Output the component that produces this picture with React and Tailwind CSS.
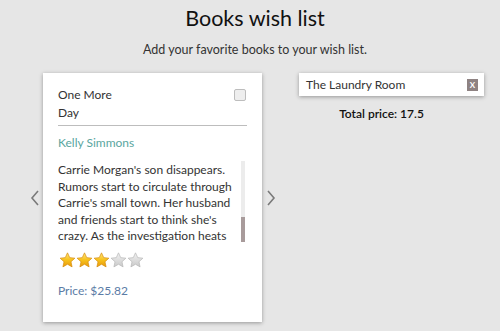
import React from "react";

const Star = ({ filled }) => (
  <svg width="17" height="16" viewBox="0 0 24 23">
    <defs>
      <linearGradient id={filled ? "gs" : "gg"} x1="0" y1="0" x2="0" y2="1">
        {filled ? (
          <>
            <stop offset="0" stopColor="#ffe680" />
            <stop offset="0.5" stopColor="#f7c21c" />
            <stop offset="1" stopColor="#e89a0c" />
          </>
        ) : (
          <>
            <stop offset="0" stopColor="#f2f2f2" />
            <stop offset="1" stopColor="#c9c9c9" />
          </>
        )}
      </linearGradient>
    </defs>
    <path
      d="M12 1.2l3.2 6.9 7.4.8-5.6 5.1 1.6 7.4L12 17.6l-6.6 3.8 1.6-7.4-5.6-5.1 7.4-.8z"
      fill={`url(#${filled ? "gs" : "gg"})`}
      stroke={filled ? "#d58a0a" : "#b5b5b5"}
      strokeWidth="1"
      strokeLinejoin="round"
    />
  </svg>
);

const Chevron = ({ dir }) => (
  <svg width="12" height="18" viewBox="0 0 12 18">
    <path
      d={dir === "left" ? "M9 2 L3 9 L9 16" : "M3 2 L9 9 L3 16"}
      fill="none"
      stroke="#7a7a7a"
      strokeWidth="1.6"
    />
  </svg>
);

export default function App() {
  return (
    <div
      className="w-[500px] h-[331px] bg-[#e6e6e6] overflow-hidden text-[#2b2b2b]"
      style={{ fontFamily: "Lato, 'Open Sans', sans-serif" }}
    >
      <h1 className="text-center text-[21.5px] leading-[28px] pt-[4px] pl-[10px] text-[#111]">
        Books wish list
      </h1>
      <p className="text-center text-[12.5px] leading-[16px] mt-[10px] pl-[10px] text-[#333]">
        Add your favorite books to your wish list.
      </p>
      <div className="flex mt-[15px]">
        <div className="flex items-center pl-[29px]">
          <Chevron dir="left" />
          <div className="ml-[2px] w-[219px] h-[249px] bg-white shadow-[0_1px_4px_rgba(0,0,0,0.35)] px-[15px] pt-[13px]">
            <div className="flex justify-between">
              <div className="text-[12px] leading-[18px] text-[#333] w-[70px]">
                One More Day
              </div>
              <div className="mt-[3px] mr-[1px] w-[12px] h-[12px] border border-[#bdbdbd] rounded-[2px] bg-[#eeeeee]" />
            </div>
            <div className="mt-[3px] border-t border-[#bdbdbd]" />
            <div className="mt-[9px] text-[12px] leading-[16px] text-[#5aa6a0]">
              Kelly Simmons
            </div>
            <div className="mt-[10px] flex h-[81px]">
              <div className="text-[12px] leading-[16.5px] text-[#333] overflow-hidden flex-1 pt-[1px]">
                Carrie Morgan's son disappears. Rumors start to circulate through
                Carrie's small town. Her husband and friends start to think she's
                crazy. As the investigation heats up
              </div>
              <div className="w-[4px] h-full bg-[#ececec] flex flex-col justify-end ml-[2px] mr-[2px]">
                <div className="h-[25px] bg-[#a89b9b]" />
              </div>
            </div>
            <div className="flex mt-[10px] ml-[1px]">
              <Star filled />
              <Star filled />
              <Star filled />
              <Star />
              <Star />
            </div>
            <div className="mt-[15px] text-[12px] leading-[16px] text-[#5b7ca6]">
              Price: $25.82
            </div>
          </div>
          <div className="ml-[3px]">
            <Chevron dir="right" />
          </div>
        </div>
        <div className="ml-[22px] w-[185px]">
          <div className="h-[23px] bg-white shadow-[0_1px_4px_rgba(0,0,0,0.35)] flex items-center justify-between pl-[7px] pr-[6px]">
            <span className="text-[12px] text-[#333]">The Laundry Room</span>
            <span className="w-[11px] h-[12px] bg-[#8e8282] text-white text-[8px] leading-[12px] text-center font-bold">
              X
            </span>
          </div>
          <div className="text-center text-[12px] mt-[9px] pr-[20px] text-[#111] font-semibold">
            Total price: 17.5
          </div>
        </div>
      </div>
    </div>
  );
}
